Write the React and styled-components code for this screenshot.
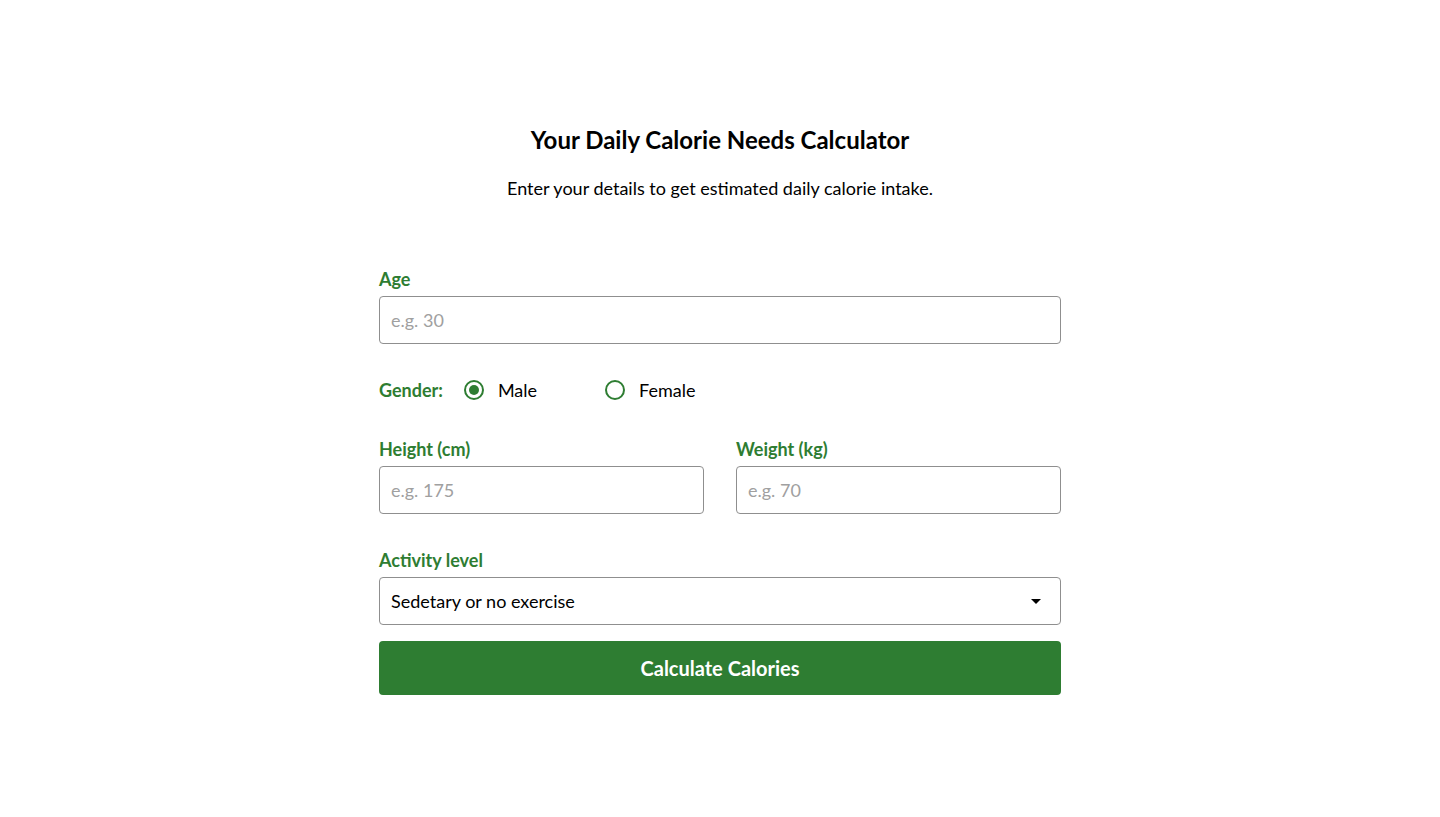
import React, { useState } from "react";
import styled, { createGlobalStyle } from "styled-components";

const GlobalStyle = createGlobalStyle`
  body {
    margin: 0;
    background: #ffffff;
    font-family: Lato, "Open Sans", sans-serif;
    color: #000;
  }
`;

const GREEN = "#2e7d32";

const Page = styled.main`
  display: flex;
  justify-content: center;
  padding-top: 126px;
`;

const Card = styled.div`
  width: 682px;
  display: flex;
  flex-direction: column;
`;

const Title = styled.h1`
  margin: 0;
  font-size: 24px;
  line-height: 28px;
  font-weight: 700;
  text-align: center;
`;

const Subtitle = styled.p`
  margin: 22px 0 0;
  font-size: 18px;
  line-height: 24px;
  text-align: center;
`;

const Form = styled.form`
  display: flex;
  flex-direction: column;
  margin-top: 68px;
`;

const Field = styled.div`
  display: flex;
  flex-direction: column;
  gap: 6px;
  flex: 1;
  margin-top: ${(p) => p.$mt || 0}px;
`;

const Label = styled.label`
  font-size: 18px;
  line-height: 22px;
  font-weight: 700;
  color: ${GREEN};
`;

const Input = styled.input`
  box-sizing: border-box;
  height: 48px;
  width: 100%;
  border: 1px solid #8f8f8f;
  border-radius: 4px;
  padding: 0 11px;
  font-family: inherit;
  font-size: 18px;
  color: #000;
  outline: none;
  &::placeholder {
    color: #a0a0a0;
  }
`;

const GenderRow = styled.div`
  display: flex;
  align-items: center;
  height: 38px;
  margin-top: 27px;
`;

const Option = styled.label`
  display: flex;
  align-items: center;
  gap: 14px;
  font-size: 18px;
  margin-left: ${(p) => p.$ml}px;
  cursor: pointer;
`;

const RadioDot = styled.span`
  box-sizing: border-box;
  width: 20px;
  height: 20px;
  border-radius: 50%;
  border: 2px solid ${GREEN};
  display: flex;
  align-items: center;
  justify-content: center;
  &::after {
    content: "";
    width: 10px;
    height: 10px;
    border-radius: 50%;
    background: ${GREEN};
    display: ${(p) => (p.$on ? "block" : "none")};
  }
`;

const Row = styled.div`
  display: flex;
  gap: 32px;
  margin-top: 29px;
`;

const SelectBox = styled.div`
  box-sizing: border-box;
  height: 48px;
  border: 1px solid #8f8f8f;
  border-radius: 4px;
  padding: 0 19px 0 11px;
  display: flex;
  align-items: center;
  justify-content: space-between;
  font-size: 18px;
`;

const Caret = styled.span`
  width: 0;
  height: 0;
  border-left: 5px solid transparent;
  border-right: 5px solid transparent;
  border-top: 5px solid #000;
`;

const Button = styled.button`
  margin-top: 16px;
  height: 54px;
  border: none;
  border-radius: 4px;
  background: ${GREEN};
  color: #fff;
  font-family: inherit;
  font-size: 20px;
  font-weight: 700;
  cursor: pointer;
`;

const App = () => {
  const [gender, setGender] = useState("male");

  return (
    <Page>
      <GlobalStyle />
      <Card>
        <Title>Your Daily Calorie Needs Calculator</Title>
        <Subtitle>Enter your details to get estimated daily calorie intake.</Subtitle>
        <Form onSubmit={(e) => e.preventDefault()}>
          <Field>
            <Label>Age</Label>
            <Input placeholder="e.g. 30" />
          </Field>

          <GenderRow>
            <Label>Gender:</Label>
            <Option $ml={21} onClick={() => setGender("male")}>
              <RadioDot $on={gender === "male"} />
              Male
            </Option>
            <Option $ml={68} onClick={() => setGender("female")}>
              <RadioDot $on={gender === "female"} />
              Female
            </Option>
          </GenderRow>

          <Row>
            <Field>
              <Label>Height (cm)</Label>
              <Input placeholder="e.g. 175" />
            </Field>
            <Field>
              <Label>Weight (kg)</Label>
              <Input placeholder="e.g. 70" />
            </Field>
          </Row>

          <Field $mt={35}>
            <Label>Activity level</Label>
            <SelectBox>
              Sedetary or no exercise
              <Caret />
            </SelectBox>
          </Field>

          <Button type="submit">Calculate Calories</Button>
        </Form>
      </Card>
    </Page>
  );
};

export default App;
